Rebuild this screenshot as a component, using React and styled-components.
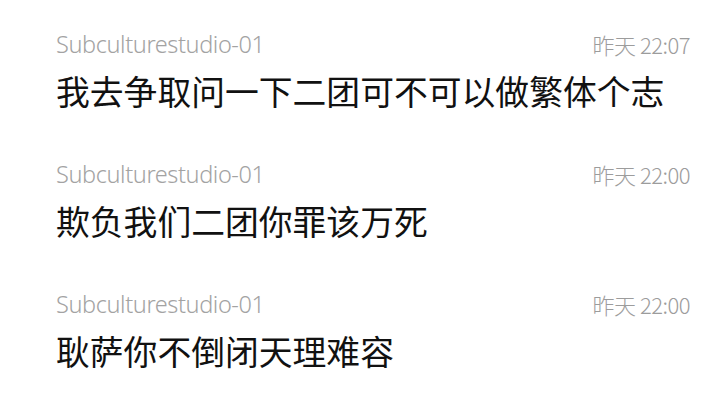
import React from 'react';
import styled, { createGlobalStyle } from 'styled-components';

const GlobalStyle = createGlobalStyle`
  body {
    margin: 0;
    background: #ffffff;
    font-family: "Noto Sans", "Noto Sans CJK SC", sans-serif;
  }
`;

const List = styled.div`
  width: 720px;
  height: 414px;
  padding: 28px 30px 0 56px;
  box-sizing: border-box;
  display: flex;
  flex-direction: column;
  gap: 44px;
  overflow: hidden;
`;

const Comment = styled.div`
  display: flex;
  flex-direction: column;
  gap: 8px;
`;

const Header = styled.div`
  display: flex;
  justify-content: space-between;
  align-items: center;
  height: 32px;
`;

const Name = styled.span`
  font-family: "Noto Sans", "Noto Sans CJK SC", sans-serif;
  font-weight: 300;
  font-size: 23.5px;
  color: #a3a3a3;
  letter-spacing: -0.4px;
`;

const Time = styled.span`
  font-family: "Noto Sans CJK SC", sans-serif;
  font-weight: 300;
  font-size: 22px;
  color: #9c9c9c;
  letter-spacing: -0.5px;
`;

const Message = styled.div`
  font-family: "Noto Sans CJK SC", sans-serif;
  font-weight: 400;
  font-size: 33.8px;
  line-height: 46px;
  color: #111111;
`;

const comments = [
  { name: 'Subculturestudio-01', time: '昨天 22:07', text: '我去争取问一下二团可不可以做繁体个志' },
  { name: 'Subculturestudio-01', time: '昨天 22:00', text: '欺负我们二团你罪该万死' },
  { name: 'Subculturestudio-01', time: '昨天 22:00', text: '耿萨你不倒闭天理难容' },
];

export default function App() {
  return (
    <>
      <GlobalStyle />
      <List>
        {comments.map((c, i) => (
          <Comment key={i}>
            <Header>
              <Name>{c.name}</Name>
              <Time>{c.time}</Time>
            </Header>
            <Message>{c.text}</Message>
          </Comment>
        ))}
      </List>
    </>
  );
}
